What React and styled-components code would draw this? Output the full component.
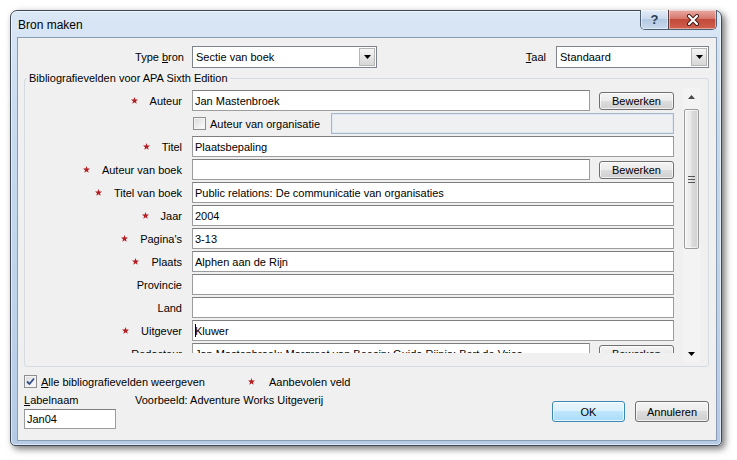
import React from 'react';
import styled, { createGlobalStyle } from 'styled-components';

const GlobalStyle = createGlobalStyle`
  html, body {
    margin: 0;
    padding: 0;
    background: #fff;
  }
  body {
    font-family: "Liberation Sans", Arial, sans-serif;
    font-size: 11px;
    color: #000;
  }
`;

const Page = styled.div`
  width: 737px;
  height: 460px;
  box-sizing: border-box;
  padding: 10px 0 0 10px;
`;

const Window = styled.div`
  width: 712px;
  height: 436px;
  box-sizing: border-box;
  border: 1px solid #3e4856;
  border-radius: 7px 7px 5px 5px;
  background: linear-gradient(180deg, #dae7f5 0%, #c8dbef 25%, #bed3ea 70%, #b5cbe5 100%);
  box-shadow: 3px 3px 7px rgba(0, 0, 0, 0.55), inset 0 0 0 1px rgba(255, 255, 255, 0.55);
  display: flex;
  flex-direction: column;
`;

const TitleBar = styled.div`
  height: 26px;
  display: flex;
  align-items: center;
  padding-left: 7px;
`;

const Title = styled.div`
  flex: 1;
  font-size: 12px;
  padding-top: 1px;
`;

const CaptionButtons = styled.div`
  align-self: flex-start;
  display: flex;
  margin: -1px 4px 0 0;
  border: 1px solid #4f5d70;
  border-top: none;
  border-radius: 0 0 5px 5px;
  overflow: hidden;
`;

const CaptionButton = styled.div`
  width: ${p => p.w}px;
  height: 19px;
  display: flex;
  align-items: center;
  justify-content: center;
  background: ${p => p.close
    ? 'linear-gradient(180deg, #e9aba3 0%, #d7786d 45%, #c24a3a 50%, #d0604d 100%)'
    : 'linear-gradient(180deg, #e6eef8 0%, #cbdaed 45%, #b4c9e2 50%, #c9daee 100%)'};
  border-left: ${p => p.close ? '1px solid #5b3b3b' : 'none'};
  box-shadow: inset 0 0 0 1px rgba(255, 255, 255, 0.45);
  font-weight: bold;
  font-size: 13px;
  color: #2b3a52;
`;

const Client = styled.div`
  flex: 1;
  margin: 0 4px 4px 6px;
  border: 1px solid #8a9cb2;
  background: #f0f0f0;
  padding: 8px 7px 0 6px;
  display: flex;
  flex-direction: column;
`;

const TopRow = styled.div`
  display: flex;
  align-items: center;
  height: 22px;
`;

const TopLabel = styled.div`
  width: ${p => p.w}px;
  text-align: right;
  margin-right: ${p => p.gap}px;
`;

const Select = styled.div`
  width: ${p => p.w}px;
  height: 22px;
  box-sizing: border-box;
  border: 1px solid #7f848c;
  background: #fff;
  display: flex;
  align-items: center;
  padding-left: 3px;
`;

const SelectText = styled.div`
  flex: 1;
`;

const DropButton = styled.div`
  width: 16px;
  height: 18px;
  margin-right: 1px;
  box-sizing: border-box;
  border: 1px solid #b5b5b5;
  background: linear-gradient(180deg, #f6f6f6 0%, #e6e6e6 50%, #d6d6d6 100%);
  display: flex;
  align-items: center;
  justify-content: center;
`;

const Spacer = styled.div`
  flex: 1;
`;

const GroupBox = styled.fieldset`
  margin: 4px 0 0 0;
  padding: 0;
  border: 1px solid #d5dbe1;
  border-radius: 3px;
  min-inline-size: 0;
`;

const Legend = styled.legend`
  padding: 0 2px;
  margin-left: 2px;
  line-height: 13px;
`;

const ScrollPanel = styled.div`
  display: flex;
  height: 274px;
  margin-top: 3px;
  padding-bottom: 4px;
`;

const FieldList = styled.div`
  width: 649px;
  height: 265px;
  overflow: hidden;
  margin-right: 9px;
  padding-top: 2px;
  box-sizing: border-box;
  display: flex;
  flex-direction: column;
  gap: 2px;
`;

const FieldRow = styled.div`
  display: grid;
  grid-template-columns: 157px 1fr;
  column-gap: 10px;
  height: 21px;
  flex-shrink: 0;
  align-items: center;
`;

const LabelCell = styled.div`
  display: flex;
  justify-content: flex-end;
  align-items: center;
  gap: 12px;
`;

const FieldCell = styled.div`
  display: flex;
  align-items: center;
  justify-content: space-between;
  height: 21px;
`;

const TextBox = styled.div`
  width: ${p => (p.w ? `${p.w}px` : '100%')};
  height: ${p => p.h || 21}px;
  box-sizing: border-box;
  border: 1px solid #9c9c9c;
  border-top-color: #7e7e7e;
  background: #fff;
  padding: 0 2px;
  display: flex;
  align-items: center;
  white-space: nowrap;
  overflow: hidden;
`;

const DisabledBox = styled.div`
  width: 343px;
  height: 21px;
  box-sizing: border-box;
  border: 1px solid #a3b8cd;
  box-shadow: inset 0 0 0 1px #dfe8f1;
  background: #eef0f2;
`;

const Caret = styled.span`
  display: inline-block;
  width: 1px;
  height: 13px;
  background: #000;
  margin-right: -1px;
`;

const Button = styled.div`
  width: ${p => p.w}px;
  height: ${p => p.h || 18}px;
  box-sizing: border-box;
  border: 1px solid ${p => (p.primary ? '#3c8ab3' : '#707070')};
  border-radius: 3px;
  background: ${p => p.primary
    ? 'linear-gradient(180deg, #eaf6fd 0%, #d9f0fc 50%, #bee6fd 50%, #a9dbf6 100%)'
    : 'linear-gradient(180deg, #f4f4f4 0%, #ebebeb 50%, #dddddd 50%, #cfcfcf 100%)'};
  box-shadow: inset 0 0 0 1px rgba(255, 255, 255, 0.7);
  display: flex;
  align-items: center;
  justify-content: center;
`;

const CheckLine = styled.label`
  display: flex;
  align-items: center;
  gap: ${p => p.gap}px;
  margin-left: ${p => p.ml || 0}px;
  width: ${p => (p.w ? `${p.w}px` : 'auto')};
`;

const CheckBox = styled.div`
  width: 13px;
  height: 13px;
  box-sizing: border-box;
  border: 1px solid #8e8f8f;
  background: linear-gradient(135deg, #d8d8d8 0%, #f0f0f0 60%, #fdfdfd 100%);
  box-shadow: inset 0 0 0 1px #f4f4f4;
  display: flex;
  align-items: center;
  justify-content: center;
  flex-shrink: 0;
`;

const ScrollBar = styled.div`
  width: 17px;
  display: flex;
  flex-direction: column;
  background: #f3f3f3;
`;

const ArrowButton = styled.div`
  height: 17px;
  display: flex;
  align-items: center;
  justify-content: center;
`;

const Thumb = styled.div`
  height: 140px;
  margin: 4px 1px 0 1px;
  box-sizing: border-box;
  border: 1px solid #9c9c9c;
  border-radius: 2px;
  background: linear-gradient(90deg, #f3f3f3 0%, #e9e9e9 45%, #dadada 55%, #d2d2d2 100%);
  box-shadow: inset 0 0 0 1px rgba(255, 255, 255, 0.6);
  display: flex;
  align-items: center;
  justify-content: center;
`;

const Grip = styled.div`
  width: 7px;
  height: 7px;
  background: repeating-linear-gradient(180deg, #555 0 1px, transparent 1px 3px);
`;

const Bottom = styled.div`
  display: flex;
  justify-content: space-between;
  align-items: flex-end;
  margin-top: 8px;
`;

const LeftCol = styled.div`
  display: flex;
  flex-direction: column;
`;

const OptionsRow = styled.div`
  display: flex;
  align-items: center;
  height: 13px;
`;

const InfoRow = styled.div`
  display: flex;
  height: 13px;
  margin-top: 6px;
  margin-bottom: 2px;
`;

const InfoLabel = styled.div`
  width: 111px;
`;

const Buttons = styled.div`
  display: flex;
  gap: 10px;
  margin-bottom: 7px;
`;

const Key = styled.span`
  text-decoration: underline;
  text-underline-offset: 1px;
`;

const Star = () => (
  <svg width="7" height="7" viewBox="0 0 10 10">
    <polygon points="5,0 6.3,3.4 10,3.6 7.1,5.9 8.1,9.6 5,7.5 1.9,9.6 2.9,5.9 0,3.6 3.7,3.4" fill="#b51f24" />
  </svg>
);

const Triangle = ({ up }) => (
  <svg width="7" height="4" viewBox="0 0 7 4">
    <polygon points={up ? '0,4 7,4 3.5,0' : '0,0 7,0 3.5,4'} fill={up ? '#4a4a4a' : '#000'} />
  </svg>
);

const CloseGlyph = () => (
  <svg width="14" height="12" viewBox="0 0 14 12">
    <path d="M3 2 L11 10 M11 2 L3 10" stroke="#3d1b16" strokeWidth="4" strokeLinecap="round" />
    <path d="M3 2 L11 10 M11 2 L3 10" stroke="#fff" strokeWidth="2.2" strokeLinecap="round" />
  </svg>
);

const Check = () => (
  <svg width="9" height="9" viewBox="0 0 9 9">
    <path d="M1 4.5 L3.5 7 L8 1.5" stroke="#2f4f8a" strokeWidth="1.8" fill="none" />
  </svg>
);

const fields = [
  { label: 'Auteur', req: true, value: 'Jan Mastenbroek', edit: true },
  { org: true },
  { label: 'Titel', req: true, value: 'Plaatsbepaling' },
  { label: 'Auteur van boek', req: true, value: '', edit: true },
  { label: 'Titel van boek', req: true, value: 'Public relations: De communicatie van organisaties' },
  { label: 'Jaar', req: true, value: '2004' },
  { label: "Pagina's", req: true, value: '3-13' },
  { label: 'Plaats', req: true, value: 'Alphen aan de Rijn' },
  { label: 'Provincie', value: '' },
  { label: 'Land', value: '' },
  { label: 'Uitgever', req: true, value: 'Kluwer', caret: true },
  { label: 'Redacteur', value: 'Jan Mastenbroek; Margreet van Beesin; Guido Rijnja; Bert de Vries', edit: true },
];

function Field({ f }) {
  if (f.org) {
    return (
      <FieldRow>
        <div />
        <FieldCell>
          <CheckLine gap={4} ml={1}>
            <CheckBox />
            Auteur van organisatie
          </CheckLine>
          <DisabledBox />
        </FieldCell>
      </FieldRow>
    );
  }
  return (
    <FieldRow>
      <LabelCell>
        {f.req && <Star />}
        <span>{f.label}</span>
      </LabelCell>
      <FieldCell>
        <TextBox w={f.edit ? 398 : null}>
          {f.caret && <Caret />}
          {f.value}
        </TextBox>
        {f.edit && <Button w={75}>Bewerken</Button>}
      </FieldCell>
    </FieldRow>
  );
}

export default function App() {
  return (
    <Page>
      <GlobalStyle />
      <Window>
        <TitleBar>
          <Title>Bron maken</Title>
          <CaptionButtons>
            <CaptionButton w={27}>?</CaptionButton>
            <CaptionButton w={47} close>
              <CloseGlyph />
            </CaptionButton>
          </CaptionButtons>
        </TitleBar>
        <Client>
          <TopRow>
            <TopLabel w={160} gap={8}>
              Type <Key>b</Key>ron
            </TopLabel>
            <Select w={185}>
              <SelectText>Sectie van boek</SelectText>
              <DropButton>
                <Triangle />
              </DropButton>
            </Select>
            <Spacer />
            <TopLabel w={30} gap={10}>
              <Key>T</Key>aal
            </TopLabel>
            <Select w={153}>
              <SelectText>Standaard</SelectText>
              <DropButton>
                <Triangle />
              </DropButton>
            </Select>
          </TopRow>

          <GroupBox>
            <Legend>Bibliografievelden voor APA Sixth Edition</Legend>
            <ScrollPanel>
              <FieldList>
                {fields.map((f, i) => (
                  <Field key={i} f={f} />
                ))}
              </FieldList>
              <ScrollBar>
                <ArrowButton>
                  <Triangle up />
                </ArrowButton>
                <Thumb>
                  <Grip />
                </Thumb>
                <Spacer />
                <ArrowButton>
                  <Triangle up={false} />
                </ArrowButton>
              </ScrollBar>
            </ScrollPanel>
          </GroupBox>

          <Bottom>
            <LeftCol>
              <OptionsRow>
                <CheckLine gap={4} w={224}>
                  <CheckBox>
                    <Check />
                  </CheckBox>
                  <span>
                    <Key>A</Key>lle bibliografievelden weergeven
                  </span>
                </CheckLine>
                <CheckLine gap={14}>
                  <Star />
                  Aanbevolen veld
                </CheckLine>
              </OptionsRow>
              <InfoRow>
                <InfoLabel>
                  <Key>L</Key>abelnaam
                </InfoLabel>
                <div>Voorbeeld: Adventure Works Uitgeverij</div>
              </InfoRow>
              <TextBox w={92} h={20}>Jan04</TextBox>
            </LeftCol>
            <Buttons>
              <Button w={73} h={21} primary>OK</Button>
              <Button w={74} h={21}>Annuleren</Button>
            </Buttons>
          </Bottom>
        </Client>
      </Window>
    </Page>
  );
}
